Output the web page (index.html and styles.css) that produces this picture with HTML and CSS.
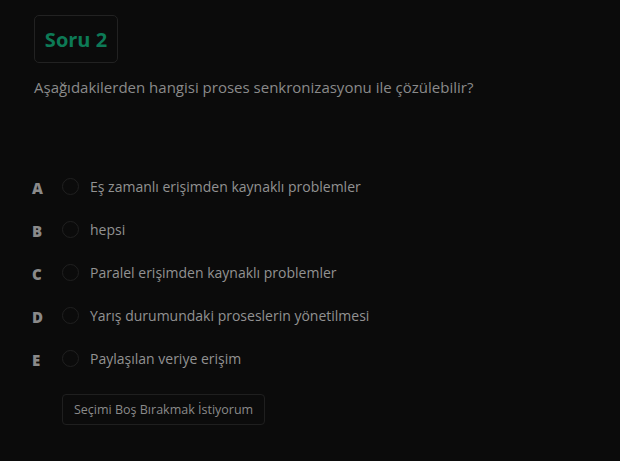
FILE: index.html
```html
<!DOCTYPE html>
<html lang="tr">
<head>
<meta charset="utf-8">
<title>Soru 2</title>
<link rel="stylesheet" href="styles.css">
</head>
<body>
<main class="page">
  <div class="badge">Soru 2</div>
  <p class="question">Aşağıdakilerden hangisi proses senkronizasyonu ile çözülebilir?</p>
  <ul class="options">
    <li class="option"><span class="letter">A</span><span class="radio"></span><span class="label">Eş zamanlı erişimden kaynaklı problemler</span></li>
    <li class="option"><span class="letter">B</span><span class="radio"></span><span class="label">hepsi</span></li>
    <li class="option"><span class="letter">C</span><span class="radio"></span><span class="label">Paralel erişimden kaynaklı problemler</span></li>
    <li class="option"><span class="letter">D</span><span class="radio"></span><span class="label">Yarış durumundaki proseslerin yönetilmesi</span></li>
    <li class="option"><span class="letter">E</span><span class="radio"></span><span class="label">Paylaşılan veriye erişim</span></li>
  </ul>
  <button class="skip" type="button">Seçimi Boş Bırakmak İstiyorum</button>
</main>
</body>
</html>
```
FILE: styles.css
```css
html, body {
  margin: 0;
  padding: 0;
  background: #0b0b0b;
  height: 100%;
}
body {
  font-family: "Open Sans", "Noto Sans", sans-serif;
  color: #8d8d8d;
}
.page {
  padding: 15px 0 0 32px;
}
.badge {
  margin-left: 2px;
  box-sizing: border-box;
  width: 84px;
  height: 48px;
  border: 1px solid #222222;
  border-radius: 5px;
  display: flex;
  align-items: center;
  justify-content: center;
  font-size: 20px;
  font-weight: 700;
  color: #0d7a56;
}
.question {
  margin: 14px 0 0 2px;
  font-size: 15px;
  line-height: 20px;
  color: #8a8a8a;
}
.options {
  list-style: none;
  margin: 68px 0 0 0;
  padding: 0;
}
.option {
  height: 43px;
  display: flex;
  align-items: center;
}
.letter {
  width: 30px;
  font-size: 15px;
  font-weight: 800;
  color: #8a8a8a;
  margin-top: 2px;
}
.radio {
  box-sizing: border-box;
  width: 17px;
  height: 17px;
  border: 1px solid #202020;
  border-radius: 50%;
  margin-right: 11px;
}
.label {
  font-size: 14px;
  font-weight: 500;
  color: #929292;
}
.skip {
  margin: 14px 0 0 30px;
  box-sizing: border-box;
  height: 31px;
  padding: 0 11px;
  background: transparent;
  border: 1px solid #1f1f1f;
  border-radius: 4px;
  font-family: inherit;
  font-size: 12.5px;
  color: #8a8a8a;
}
```
